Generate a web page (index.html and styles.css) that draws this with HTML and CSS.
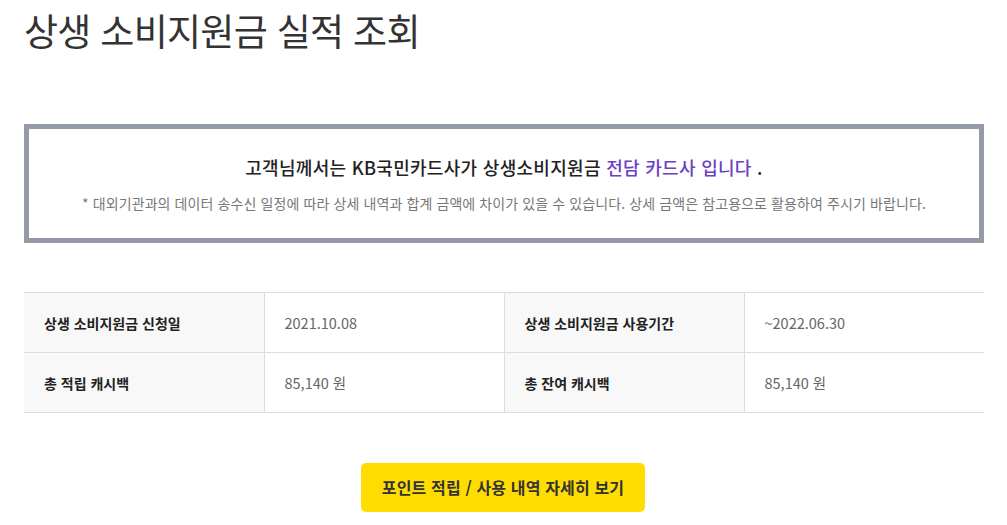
FILE: index.html
```html
<!DOCTYPE html>
<html lang="ko">
<head>
    <meta charset="UTF-8">
    <meta name="viewport" content="width=device-width, initial-scale=1.0">
    <title>상생 소비지원금 실적 조회</title>
    <link rel="stylesheet" href="styles.css">
</head>
<body>
    <div class="content">
        <h1 class="page-title">상생 소비지원금 실적 조회</h1>

        <div class="notice-box">
            <p class="notice-main">고객님께서는 KB국민카드사가 상생소비지원금 <span class="highlight">전담 카드사 입니다</span> .</p>
            <p class="notice-sub">* 대외기관과의 데이터 송수신 일정에 따라 상세 내역과 합계 금액에 차이가 있을 수 있습니다. 상세 금액은 참고용으로 활용하여 주시기 바랍니다.</p>
        </div>

        <table class="info-table">
            <tr>
                <th>상생 소비지원금 신청일</th>
                <td>2021.10.08</td>
                <th>상생 소비지원금 사용기간</th>
                <td>~2022.06.30</td>
            </tr>
            <tr>
                <th>총 적립 캐시백</th>
                <td>85,140 원</td>
                <th>총 잔여 캐시백</th>
                <td>85,140 원</td>
            </tr>
        </table>

        <div class="btn-area">
            <a href="#" class="btn-detail">포인트 적립 / 사용 내역 자세히 보기</a>
        </div>
    </div>
</body>
</html>
```

FILE: styles.css
```css
body {
    font-family: "Noto Sans CJK KR", "Noto Sans", sans-serif;
    margin: 0;
    background-color: #fff;
    color: #333;
}
.content {
    width: 960px;
    padding: 0 23px 0 24px;
}
.page-title {
    margin: 0;
    padding-top: 4px;
    font-size: 37px;
    font-weight: 400;
    color: #333;
    line-height: 52px;
    letter-spacing: -0.7px;
}
.notice-box {
    margin-top: 68px;
    border: 5px solid #949aa7;
    padding: 23px 10px 25px;
    text-align: center;
}
.notice-main {
    margin: 0;
    font-size: 18px;
    font-weight: 500;
    color: #222;
    line-height: 30px;
    letter-spacing: 0.3px;
}
.highlight {
    color: #6a40c4;
}
.notice-sub {
    margin: 11px 0 0;
    font-size: 14px;
    color: #777;
    line-height: 20px;
    letter-spacing: 0.1px;
}
.info-table {
    width: 100%;
    margin-top: 49px;
    border-collapse: collapse;
    table-layout: fixed;
}
.info-table th,
.info-table td {
    height: 59px;
    padding: 0 0 0 20px;
    text-align: left;
    font-size: 14px;
    border-top: 1px solid #dddddd;
    border-bottom: 1px solid #dddddd;
    border-left: 1px solid #dddddd;
}
.info-table tr > :first-child {
    border-left: none;
}
.info-table th {
    background-color: #f8f8f8;
    color: #222;
    font-weight: 700;
}
.info-table td {
    color: #666;
    font-weight: 400;
    font-size: 14.5px;
}
.btn-area {
    display: flex;
    justify-content: center;
    margin-top: 50px;
}
.btn-detail {
    display: block;
    padding: 0 21px;
    margin-right: 2px;
    height: 49px;
    line-height: 49px;
    background-color: #ffdd00;
    border-radius: 5px;
    color: #333;
    font-size: 16px;
    font-weight: 700;
    text-decoration: none;
    letter-spacing: 0.15px;
}
```
